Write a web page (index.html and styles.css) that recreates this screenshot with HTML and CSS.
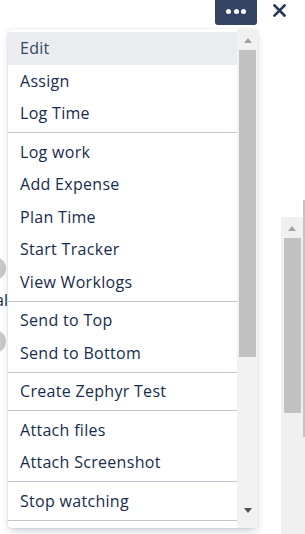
FILE: index.html
```html
<!DOCTYPE html>
<html lang="en">
<head>
    <meta charset="UTF-8">
    <meta name="viewport" content="width=device-width, initial-scale=1.0">
    <title>Issue actions</title>
    <link rel="stylesheet" href="styles.css">
</head>
<body>
    <div class="page">
        <header class="topbar">
            <button class="more" aria-label="More actions">
                <span class="dot"></span><span class="dot"></span><span class="dot"></span>
            </button>
            <button class="close" aria-label="Close">
                <svg width="13" height="13" viewBox="0 0 13 13">
                    <path d="M1.5 1.5 L11.5 11.5 M11.5 1.5 L1.5 11.5" stroke="#253858" stroke-width="2.6" stroke-linecap="square"/>
                </svg>
            </button>
        </header>

        <div class="content">
            <div class="people">
                <div class="avatar"></div>
                <div class="who-name">Manual</div>
                <div class="avatar"></div>
            </div>
            <div class="side-scroll">
                <div class="side-track">
                    <span class="arrow-up"></span>
                    <div class="side-thumb"></div>
                </div>
            </div>
        </div>

        <div class="dropdown">
            <div class="menu-list">
                <ul class="group">
                    <li class="active">Edit</li>
                    <li>Assign</li>
                    <li>Log Time</li>
                </ul>
                <ul class="group">
                    <li>Log work</li>
                    <li>Add Expense</li>
                    <li>Plan Time</li>
                    <li>Start Tracker</li>
                    <li>View Worklogs</li>
                </ul>
                <ul class="group">
                    <li>Send to Top</li>
                    <li>Send to Bottom</li>
                </ul>
                <ul class="group">
                    <li>Create Zephyr Test</li>
                </ul>
                <ul class="group">
                    <li>Attach files</li>
                    <li>Attach Screenshot</li>
                </ul>
                <ul class="group">
                    <li>Stop watching</li>
                </ul>
            </div>
            <div class="menu-scroll">
                <span class="arrow-up"></span>
                <div class="menu-thumb"></div>
                <span class="arrow-down"></span>
            </div>
        </div>
    </div>
</body>
</html>
```

FILE: styles.css
```css
body {
    margin: 0;
    background: #fff;
    color: #172b4d;
    font-family: 'Open Sans', 'Noto Sans', sans-serif;
    overflow: hidden;
}
.page {
    position: relative;
    width: 305px;
    height: 534px;
    overflow: hidden;
}
.topbar {
    display: flex;
    justify-content: flex-end;
    align-items: flex-start;
    gap: 16px;
    height: 25px;
    padding-right: 19px;
}
.more {
    display: flex;
    justify-content: center;
    align-items: center;
    gap: 2.7px;
    width: 42px;
    height: 28px;
    margin-top: -3px;
    padding: 0;
    border: none;
    border-radius: 3px;
    background: #344563;
}
.dot {
    width: 5px;
    height: 5px;
    border-radius: 50%;
    background: #fff;
}
.close {
    display: flex;
    padding: 0;
    margin-top: 4px;
    border: none;
    background: none;
}
.content {
    display: flex;
    justify-content: space-between;
    height: 509px;
}
.people {
    display: flex;
    flex-direction: column;
    padding-top: 232px;
    margin-left: -17px;
}
.avatar {
    width: 23px;
    height: 23px;
    border-radius: 50%;
    background: #c8c8c8;
}
.who-name {
    width: 25px;
    margin: 7px 0 17px;
    font-size: 16px;
    line-height: 26px;
    text-align: right;
    white-space: nowrap;
    direction: rtl;
}
.side-scroll {
    position: relative;
    width: 24px;
    padding-top: 192px;
}
.side-scroll::after {
    content: "";
    position: absolute;
    right: 0;
    top: 175px;
    width: 2px;
    height: 237px;
    background: #c4c4c4;
}
.side-track {
    display: flex;
    flex-direction: column;
    align-items: center;
    height: 317px;
    padding-right: 2px;
    background: #f0f0f0;
}
.side-track .arrow-up {
    margin-top: 9px;
}
.side-thumb {
    width: 17px;
    height: 175px;
    margin-top: 7px;
    background: #c1c1c1;
}
.dropdown {
    position: absolute;
    left: 8px;
    top: 29px;
    display: flex;
    width: 250px;
    height: 499px;
    background: #fff;
    border-radius: 3px;
    box-shadow: 0 4px 8px -2px rgba(9, 30, 66, 0.25), 0 0 1px rgba(9, 30, 66, 0.31);
    overflow: hidden;
}
.menu-list {
    flex: 1;
    overflow: hidden;
    padding-top: 0.5px;
}
.group {
    list-style: none;
    margin: 0;
    padding: 2.5px 0;
    border-bottom: 1px solid #c1c7d0;
}
.group li {
    height: 32.5px;
    padding-left: 12px;
    font-size: 16px;
    letter-spacing: 0.3px;
    line-height: 33.5px;
    white-space: nowrap;
}
.group li.active {
    background: #ebecf0;
    color: #344563;
}
.menu-scroll {
    display: flex;
    flex-direction: column;
    align-items: center;
    width: 21px;
    background: #f1f1f1;
}
.arrow-up, .arrow-down {
    width: 0;
    height: 0;
    border-left: 4.5px solid transparent;
    border-right: 4.5px solid transparent;
}
.arrow-up {
    border-bottom: 5px solid #a3a3a3;
}
.arrow-down {
    border-top: 5px solid #505050;
}
.menu-scroll .arrow-up {
    margin-top: 9px;
}
.menu-thumb {
    width: 17px;
    height: 307px;
    margin-top: 7px;
    background: #c1c1c1;
}
.menu-scroll .arrow-down {
    margin-top: 151px;
}
```
